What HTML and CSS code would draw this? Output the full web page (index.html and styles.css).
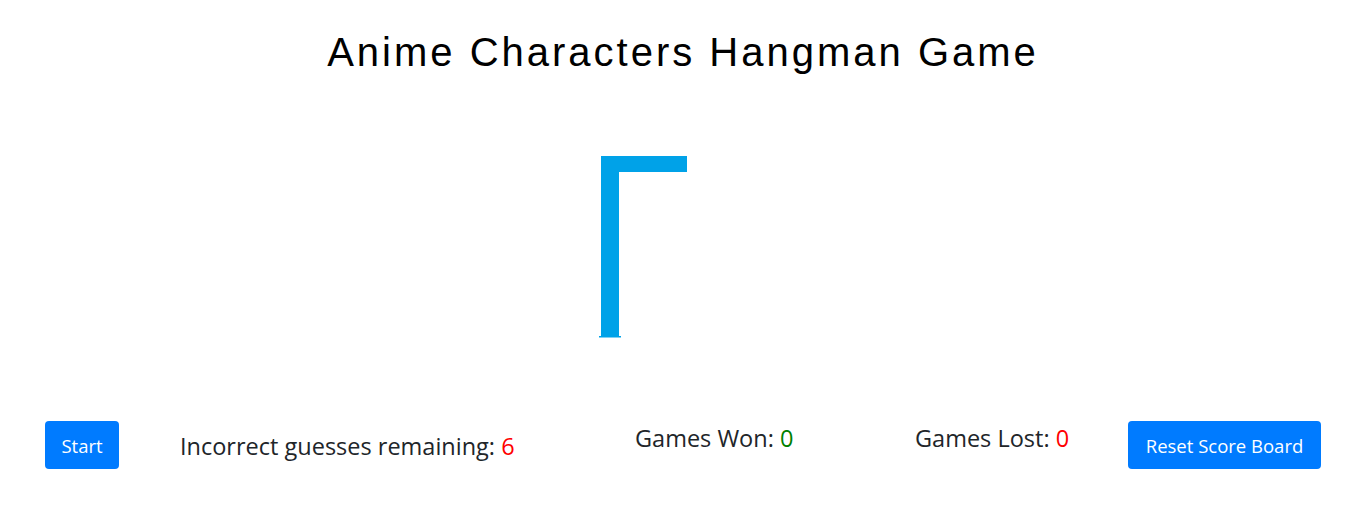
FILE: index.html
```html
<!DOCTYPE html>
<html>
<head>
<meta charset="utf-8">
<link rel="stylesheet" href="styles.css">
</head>
<body>
<h1 class="title">Anime Characters Hangman Game</h1>
<div class="stage">
  <svg class="gallows" width="300" height="200" viewBox="0 0 300 200">
    <rect x="68" y="6" width="18" height="180" fill="#00a2e8"/>
    <rect x="68" y="6" width="86" height="16" fill="#00a2e8"/>
    <rect x="66" y="186" width="22" height="1.5" fill="#00a2e8"/>
  </svg>
</div>
<div class="controls">
  <button class="btn btn-start">Start</button>
  <div class="stat stat-guesses">Incorrect guesses remaining: <span class="bad">6</span></div>
  <div class="stat stat-won">Games Won: <span class="good">0</span></div>
  <div class="stat stat-lost">Games Lost: <span class="bad">0</span></div>
  <button class="btn btn-reset">Reset Score Board</button>
</div>
</body>
</html>
```
FILE: styles.css
```css
html, body {
  margin: 0;
  padding: 0;
  background: #fff;
}
body {
  font-family: "Open Sans", "Noto Sans", sans-serif;
  color: #212529;
  width: 1366px;
}
.title {
  font-family: "Liberation Sans", Arial, sans-serif;
  font-weight: 400;
  font-size: 40px;
  letter-spacing: 3px;
  line-height: 48px;
  text-align: center;
  color: #000;
  margin: 0;
  padding-top: 28px;
}
.stage {
  display: flex;
  justify-content: center;
  padding-top: 74px;
}
.gallows {
  display: block;
}
.controls {
  display: flex;
  align-items: flex-start;
  padding: 71px 45px 0 45px;
}
.btn {
  font-family: "Open Sans", "Noto Sans", sans-serif;
  background: #007bff;
  color: #fff;
  border: none;
  border-radius: 4px;
  height: 48px;
  padding: 0 12px;
  font-size: 18.5px;
  cursor: pointer;
}
.btn-start {
  width: 74px;
}
.btn-reset {
  width: 193px;
  margin-left: auto;
}
.stat {
  font-size: 23.5px;
  line-height: 30px;
  white-space: nowrap;
}
.stat-guesses {
  margin-left: 61px;
  margin-top: 10px;
  width: 455px;
}
.stat-won {
  margin-top: 2px;
  width: 280px;
}
.stat-lost {
  margin-top: 2px;
}
.good { color: #008000; }
.bad { color: #ff0000; }
```
